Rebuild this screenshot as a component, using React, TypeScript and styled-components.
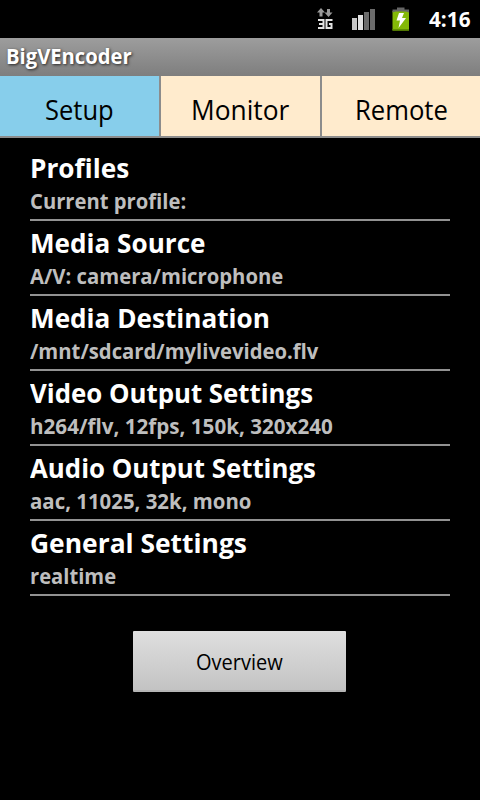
import { useLayoutEffect, useRef, useState } from 'react';
import styled, { createGlobalStyle } from 'styled-components';

const GlobalStyle = createGlobalStyle`
  body { margin: 0; background: #000; }
  * { box-sizing: border-box; }
`;

const Screen = styled.main`
  width: 480px;
  height: 800px;
  background: #000;
  font-family: 'Open Sans', 'Noto Sans', sans-serif;
  overflow: hidden;
`;

const StatusBar = styled.header`
  display: flex;
  height: 38px;
  justify-content: flex-end;
  padding-right: 10px;
`;

const StatusIcons = styled.svg`
  width: 100px;
  height: 38px;
  margin-right: 18px;
`;

const TitleBar = styled.div`
  height: 38px;
  padding: 0 6px;
  background: linear-gradient(#9d9d9d, #7e7e7e);
`;

const Tabs = styled.nav`
  display: grid;
  grid-template-columns: 159px 159px 158px;
  grid-template-rows: 60px;
  column-gap: 2px;
  height: 62px;
  background: #8c8c8c;
`;

const Tab = styled.div<{ $active?: boolean; $shift: number }>`
  display: flex;
  height: 60px;
  padding-left: ${(p) => p.$shift}px;
  background: ${(p) => (p.$active ? '#87ceeb' : '#ffebcd')};
`;

const Settings = styled.ul`
  list-style: none;
  margin: 0;
  padding: 8px 30px 0;
`;

const Setting = styled.li`
  display: flex;
  flex-direction: column;
  height: 75px;
  border-bottom: 2px solid #929292;
`;

const Label = styled.span<{ $size: number; $line: number; $bold?: boolean; $color: string; $shadow?: boolean }>`
  display: block;
  width: max-content;
  height: ${(p) => p.$line}px;
  flex: none;
  white-space: nowrap;
  transform-origin: 0 0;
  font-size: ${(p) => p.$size}px;
  line-height: ${(p) => p.$line}px;
  font-weight: ${(p) => (p.$bold ? 700 : 400)};
  color: ${(p) => p.$color};
  text-shadow: ${(p) => (p.$shadow ? '1px 1px 3px rgba(0,0,0,.75)' : 'none')};
`;

const ActionRow = styled.div`
  display: flex;
  padding: 35px 0 0 133px;
`;

const Button = styled.button`
  display: flex;
  align-items: flex-start;
  width: 213px;
  height: 61px;
  padding: 0 0 0 63px;
  border: 0;
  border-bottom: 2px solid #b5b5b5;
  border-radius: 1px;
  background: linear-gradient(#dfdfdf, #c3c3c3);
  font-family: inherit;
`;

type FitProps = {
  text: string;
  width: number;
  size: number;
  line: number;
  bold?: boolean;
  color?: string;
  shadow?: boolean;
};

// Condenses a label horizontally so it takes up the given width.
function FitLabel({ text, width, size, line, bold, color = '#000', shadow }: FitProps) {
  const ref = useRef<HTMLSpanElement>(null);
  const [scale, setScale] = useState(1);
  useLayoutEffect(() => {
    if (ref.current) setScale(width / ref.current.offsetWidth);
  }, [width, text]);
  return (
    <Label ref={ref} $size={size} $line={line} $bold={bold} $color={color} $shadow={shadow}
      style={{ transform: `scaleX(${scale})` }}>
      {text}
    </Label>
  );
}

const settings = [
  { title: 'Profiles', tw: 99, value: 'Current profile:', vw: 156 },
  { title: 'Media Source', tw: 176, value: 'A/V: camera/microphone', vw: 253 },
  { title: 'Media Destination', tw: 240, value: '/mnt/sdcard/mylivevideo.flv', vw: 288.5 },
  { title: 'Video Output Settings', tw: 283, value: 'h264/flv, 12fps, 150k, 320x240', vw: 302.5 },
  { title: 'Audio Output Settings', tw: 286, value: 'aac, 11025, 32k, mono', vw: 221.5 },
  { title: 'General Settings', tw: 217, value: 'realtime', vw: 86.5 },
];

export default function App() {
  return (
    <Screen>
      <GlobalStyle />
      <StatusBar>
        <StatusIcons viewBox="311 0 100 38">
          <g fill="#999">
            <path d="M321 8l4 4.5h-2.5v4h-3v-4H317z" />
            <path d="M328.5 17l4-4.5H330V9h-3v3.5h-2.5z" />
          </g>
          <g fill="none" stroke="#e2e2e2" strokeWidth="2">
            <path d="M318 20h5.5v8H318M319 24h4.5" />
            <path d="M332.5 20H326.500v8h5v-4h-2.5" />
          </g>
          <path fill="#c8c8c8" d="M352 18h5v12h-5z" />
          <path fill="#e2e2e2" d="M358 15h5v15h-5z" />
          <path fill="#6b6b6b" d="M364 12h5v18h-5zM370 9h5v21h-5z" />
          <path fill="#84b908" d="M392.5 11H409v19.5h-16.5z" />
          <path fill="#619000" d="M392.5 29H409v1.5h-16.5z" />
          <path fill="#666" d="M392.5 12.500V9.5H397V7.5h7.5v2h4.5v3l-3-1h-10.5z" />
          <path fill="#fff" d="M399 13h5l-2 5h4l-7.5 10 1.5-7.5h-3.5z" />
        </StatusIcons>
        <FitLabel text="4:16" width={41.5} size={20.5} line={38} bold color="#fff" />
      </StatusBar>
      <TitleBar>
        <FitLabel text="BigVEncoder" width={126} size={21} line={37} bold color="#fff" shadow />
      </TitleBar>
      <Tabs>
        <Tab $active $shift={45}><FitLabel text="Setup" width={69} size={27} line={67} /></Tab>
        <Tab $shift={29.5}><FitLabel text="Monitor" width={98.5} size={27} line={67} /></Tab>
        <Tab $shift={33}><FitLabel text="Remote" width={93} size={27} line={67} /></Tab>
      </Tabs>
      <Settings>
        {settings.map((s) => (
          <Setting key={s.title}>
            <FitLabel text={s.title} width={s.tw} size={27} line={43} bold color="#fff" />
            <FitLabel text={s.value} width={s.vw} size={21} line={24} bold color="#bebebe" />
          </Setting>
        ))}
      </Settings>
      <ActionRow>
        <Button><FitLabel text="Overview" width={86.5} size={22} line={60} /></Button>
      </ActionRow>
    </Screen>
  );
}
